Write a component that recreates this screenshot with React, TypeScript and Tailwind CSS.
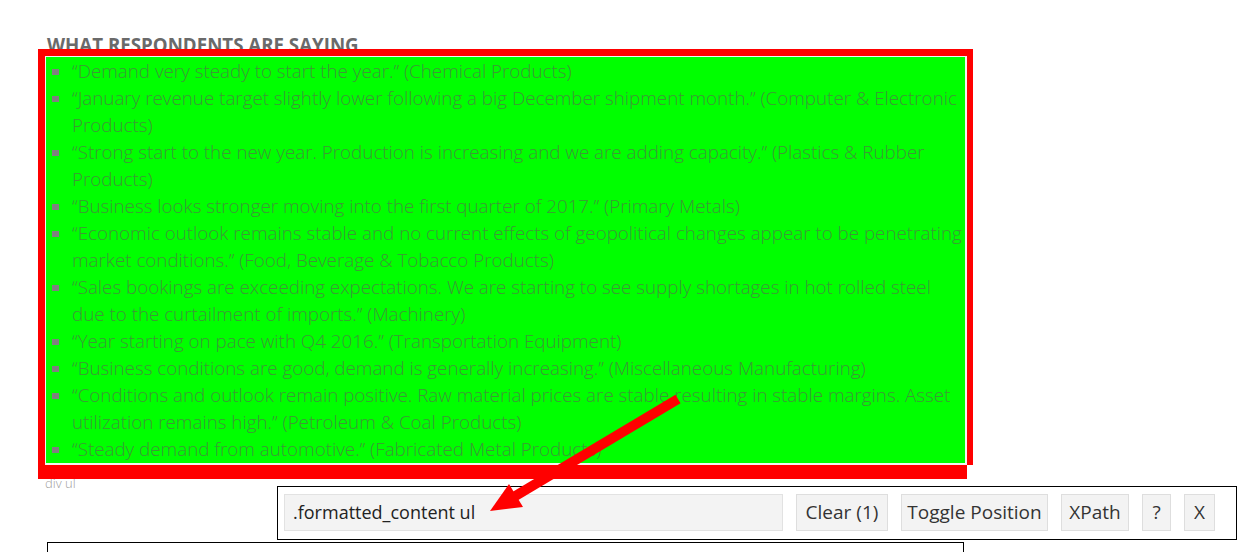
import React from "react";

const items = [
  "“Demand very steady to start the year.” (Chemical Products)",
  "“January revenue target slightly lower following a big December shipment month.” (Computer & Electronic Products)",
  "“Strong start to the new year. Production is increasing and we are adding capacity.” (Plastics & Rubber Products)",
  "“Business looks stronger moving into the first quarter of 2017.” (Primary Metals)",
  "“Economic outlook remains stable and no current effects of geopolitical changes appear to be penetrating market conditions.” (Food, Beverage & Tobacco Products)",
  "“Sales bookings are exceeding expectations. We are starting to see supply shortages in hot rolled steel due to the curtailment of imports.” (Machinery)",
  "“Year starting on pace with Q4 2016.” (Transportation Equipment)",
  "“Business conditions are good, demand is generally increasing.” (Miscellaneous Manufacturing)",
  "“Conditions and outlook remain positive. Raw material prices are stable resulting in stable margins. Asset utilization remains high.” (Petroleum & Coal Products)",
  "“Steady demand from automotive.” (Fabricated Metal Products)",
];

const buttons = [
  { label: "Clear (1)", w: "w-[92px]" },
  { label: "Toggle Position", w: "w-[147px]" },
  { label: "XPath", w: "w-[68px]" },
  { label: "?", w: "w-[29px]" },
  { label: "X", w: "w-[31px]" },
];

export default function App() {
  return (
    <div className="relative w-[1237px] h-[552px] overflow-hidden bg-white font-['Open_Sans',sans-serif]">
      <div className="flex flex-col">
        <h2 className="ml-[47px] mt-[35px] h-[20px] leading-[20px] text-[18.7px] font-bold text-[#6a6a6a] whitespace-nowrap">
          WHAT RESPONDENTS ARE SAYING
        </h2>
        <div className="ml-[38px] mt-[-6px] flex flex-col relative">
          <div className="w-[935px] bg-[#ff0000] pl-[7px] pt-[7px] pr-[6px]">
            <div className="w-[922px] h-[409px] border-l border-t border-r-2 border-b-2 border-[#f4f4f4] bg-[#00ff00]">
              <ul className="pt-[1px] pr-[2px]">
                {items.map((t, i) => (
                  <li key={i} className="relative pl-[26px] text-[18.8px] leading-[27px] font-light text-[#3f9638]">
                    <span className="absolute left-[6px] top-[11px] w-[7px] h-[6px] bg-[#7f7f7f]" />
                    {t}
                  </li>
                ))}
              </ul>
            </div>
          </div>
          <div className="w-[929px] h-[14px] bg-[#ff0000]" />
        </div>
        <div className="ml-[45px] mt-[-3px] h-[14px] leading-[14px] text-[13px] text-[#a0a0a0] font-light">div ul</div>
        <div className="ml-[47px] mt-[52px] w-[917px] h-[40px] border border-black" />
      </div>

      <div className="absolute left-[277px] top-[486px] w-[960px] h-[54px] border border-black bg-white flex items-start pl-[6px] pt-[7px] gap-[13px]">
        <div className="w-[499px] h-[37px] bg-[#f3f3f3] border border-[#e2e2e2] flex items-center pl-[8px] text-[18px] text-[#222]">
          .formatted_content ul
        </div>
        <div className="flex gap-[13px]">
          {buttons.map((b) => (
            <div
              key={b.label}
              className={`${b.w} h-[37px] bg-[#f3f3f3] border border-[#dedede] flex items-center justify-center text-[19px] text-[#333] whitespace-nowrap`}
            >
              {b.label}
            </div>
          ))}
        </div>
      </div>

      <svg className="absolute left-0 top-0 pointer-events-none" width="1237" height="552">
        <line x1="678" y1="399" x2="512" y2="498" stroke="#ff0000" strokeWidth="10" />
        <polygon points="490,511 509,484 523,507" fill="#ff0000" />
      </svg>
    </div>
  );
}
